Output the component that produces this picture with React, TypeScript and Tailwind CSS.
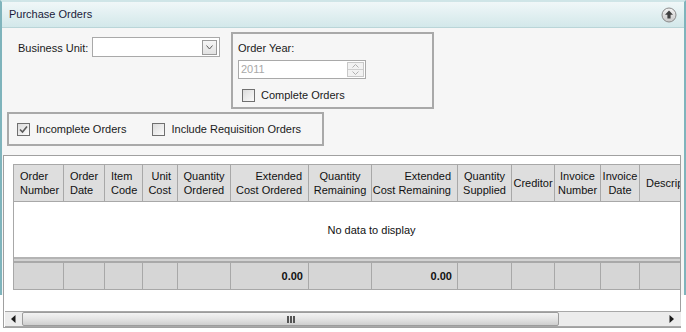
import * as React from "react";

const font = "font-['Liberation_Sans',Arial,sans-serif]";

type Col = { label: string[]; w: number; align: "left" | "right" | "center"; total?: string };

const columns: Col[] = [
  { label: ["Order", "Number"], w: 50, align: "left" },
  { label: ["Order", "Date"], w: 41, align: "left" },
  { label: ["Item", "Code"], w: 38, align: "left" },
  { label: ["Unit", "Cost"], w: 35, align: "right" },
  { label: ["Quantity", "Ordered"], w: 53, align: "center" },
  { label: ["Extended", "Cost Ordered"], w: 78, align: "right", total: "0.00" },
  { label: ["Quantity", "Remaining"], w: 63, align: "center" },
  { label: ["Extended", "Cost Remaining"], w: 86, align: "right", total: "0.00" },
  { label: ["Quantity", "Supplied"], w: 54, align: "center" },
  { label: ["Creditor"], w: 43, align: "center" },
  { label: ["Invoice", "Number"], w: 46, align: "center" },
  { label: ["Invoice", "Date"], w: 39, align: "center" },
  { label: ["Description"], w: 90, align: "left" },
];

const alignClass = {
  left: "text-left justify-start",
  right: "text-right justify-end",
  center: "text-center justify-center",
};

function Checkbox({ checked }: { checked?: boolean }) {
  return (
    <span className="flex h-[13px] w-[13px] shrink-0 items-center justify-center border border-[#707070] bg-gradient-to-br from-[#dcdcdc] to-[#fbfbfb]">
      {checked && (
        <svg width="9" height="9" viewBox="0 0 9 9" aria-hidden>
          <path d="M1 4.5 L3.5 7 L8 1.5" fill="none" stroke="#5a5a5a" strokeWidth="1.6" />
        </svg>
      )}
    </span>
  );
}

function CollapseIcon() {
  return (
    <svg width="16" height="16" viewBox="0 0 16 16" aria-hidden>
      <defs>
        <linearGradient id="cg" x1="0" y1="0" x2="0" y2="1">
          <stop offset="0" stopColor="#f4f4f4" />
          <stop offset="1" stopColor="#c8c8c8" />
        </linearGradient>
      </defs>
      <circle cx="8" cy="8" r="7" fill="url(#cg)" stroke="#8a8a8a" strokeWidth="1" />
      <path d="M8 3.5 L12 7.8 L9.6 7.8 L9.6 11.5 L6.4 11.5 L6.4 7.8 L4 7.8 Z" fill="#404040" />
    </svg>
  );
}

function Scrollbar() {
  return (
    <div className="ml-[1px] flex h-[16px] w-[676px] items-center border-y border-[#a8a8a8] bg-[#ececec]">
      <div className="flex w-[17px] items-center justify-center">
        <svg width="5" height="8" viewBox="0 0 5 8" aria-hidden>
          <path d="M4.5 0 L0 4 L4.5 8 Z" fill="#1a1a1a" />
        </svg>
      </div>
      <div className="flex h-[14px] w-[537px] items-center justify-center rounded-[2px] border border-[#9c9c9c] bg-gradient-to-b from-[#f3f3f3] via-[#e4e4e4] to-[#cfcfcf]">
        <span className="flex gap-[1px]">
          <span className="h-[7px] w-[2px] bg-[#555]" />
          <span className="h-[7px] w-[2px] bg-[#555]" />
          <span className="h-[7px] w-[2px] bg-[#555]" />
        </span>
      </div>
      <div className="flex-1" />
      <div className="flex w-[20px] items-center justify-center">
        <svg width="5" height="8" viewBox="0 0 5 8" aria-hidden>
          <path d="M0.5 0 L5 4 L0.5 8 Z" fill="#1a1a1a" />
        </svg>
      </div>
    </div>
  );
}

function Grid() {
  return (
    <div className="ml-[1px] mt-[9px] flex h-[173px] w-[678px] flex-col border border-[#a0a0a0] bg-white">
      <div className="ml-[9px] mt-[8px] w-[667px] overflow-hidden">
        <div className="w-[716px] text-[11px] leading-[14px] text-[#111]">
          {/* header */}
          <div className="flex h-[38px] border border-[#a8a8a8] bg-[#dedede]">
            {columns.map((c) => (
              <div
                key={c.label.join(" ")}
                style={{ width: c.w }}
                className={`flex shrink-0 items-center overflow-hidden whitespace-nowrap border-r border-[#a8a8a8] px-[6px] ${alignClass[c.align]}`}
              >
                <div>
                  {c.label.map((l) => (
                    <div key={l}>{l}</div>
                  ))}
                </div>
              </div>
            ))}
          </div>
          {/* body */}
          <div className="flex h-[55px] items-center justify-center border-l border-[#a8a8a8] bg-white">
            No data to display
          </div>
          {/* footer */}
          <div className="h-[2px] border-l border-[#a8a8a8] bg-[#b4b4b4]" />
          <div className="h-[2px] border-l border-[#a8a8a8] bg-[#d2d2d2]" />
          <div className="h-[2px] border-l border-[#a8a8a8] bg-[#a9a9a9]" />
          <div className="flex h-[27px] border-x border-b border-[#a8a8a8] bg-[#d6d6d6]">
            {columns.map((c) => (
              <div
                key={c.label.join(" ")}
                style={{ width: c.w }}
                className="flex shrink-0 items-center justify-end border-r border-[#a8a8a8] px-[5px] font-bold"
              >
                {c.total}
              </div>
            ))}
          </div>
        </div>
      </div>
      <div className="mt-auto">
        <Scrollbar />
      </div>
    </div>
  );
}

export default function App() {
  return (
    <div className={`${font} relative h-[332px] w-[686px] overflow-hidden bg-white text-[11px] text-black`}>
      <div className="h-[295px] border-x-2 border-t-2 border-l-[#7fb4bc] border-r-[#7fb4bc] border-t-[#cfe5e7] bg-[#f6f6f6]">
        {/* title bar */}
        <div className="flex h-[26px] items-center justify-between border-b border-[#bad5d8] bg-gradient-to-b from-[#f0f7f8] to-[#d3e8ea] pl-[7px] pr-[7px]">
          <span className="text-[11px] text-[#1b1b3a]">Purchase Orders</span>
          <CollapseIcon />
        </div>

        {/* filters */}
        <div className="flex pl-[16px] pt-[4px]">
          <div className="mt-[5px] flex w-[202px] items-start">
            <span className="mt-[3px] w-[74px] text-[#1a1a1a]">Business Unit:</span>
            <div className="flex h-[20px] w-[128px] items-center justify-end border border-[#a9a9a9] bg-white pr-[2px]">
              <span className="flex h-[15px] w-[15px] items-center justify-center border border-[#9a9a9a] bg-gradient-to-b from-[#f6f6f6] to-[#e2e2e2]">
                <svg width="7" height="5" viewBox="0 0 7 5" aria-hidden>
                  <path d="M0.5 0.5 L3.5 4 L6.5 0.5" fill="none" stroke="#5a5a5a" strokeWidth="1" />
                </svg>
              </span>
            </div>
          </div>

          <div className="ml-[11px] flex h-[77px] w-[203px] flex-col border-2 border-[#a9a9a9] pl-[5px] pt-[7px]">
            <span className="leading-[14px] text-[#1a1a1a]">Order Year:</span>
            <div className="mt-[5px] flex h-[19px] w-[128px] items-center justify-between border border-[#a9a9a9] bg-white pl-[2px] pr-[1px]">
              <span className="text-[#a8a8a8]">2011</span>
              <span className="flex h-[15px] w-[17px] flex-col border border-[#c8c8c8] bg-[#f2f2f2]">
                <span className="flex flex-1 items-center justify-center border-b border-[#cfcfcf]">
                  <svg width="7" height="4" viewBox="0 0 7 4" aria-hidden>
                    <path d="M0.5 3.5 L3.5 0.5 L6.5 3.5" fill="none" stroke="#b0b0b0" strokeWidth="1" />
                  </svg>
                </span>
                <span className="flex flex-1 items-center justify-center">
                  <svg width="7" height="4" viewBox="0 0 7 4" aria-hidden>
                    <path d="M0.5 0.5 L3.5 3.5 L6.5 0.5" fill="none" stroke="#b0b0b0" strokeWidth="1" />
                  </svg>
                </span>
              </span>
            </div>
            <label className="ml-[4px] mt-[8px] flex items-center gap-[6px] text-[#1a1a1a]">
              <Checkbox />
              Complete Orders
            </label>
          </div>
        </div>

        <div className="ml-[5px] mt-[3px] flex h-[34px] w-[317px] items-center border-2 border-[#a9a9a9] pl-[8px] text-[#1a1a1a]">
          <label className="flex items-center gap-[6px]">
            <Checkbox checked />
            Incomplete Orders
          </label>
          <label className="ml-[26px] flex items-center gap-[6px]">
            <Checkbox />
            Include Requisition Orders
          </label>
        </div>

        <Grid />
      </div>
    </div>
  );
}
